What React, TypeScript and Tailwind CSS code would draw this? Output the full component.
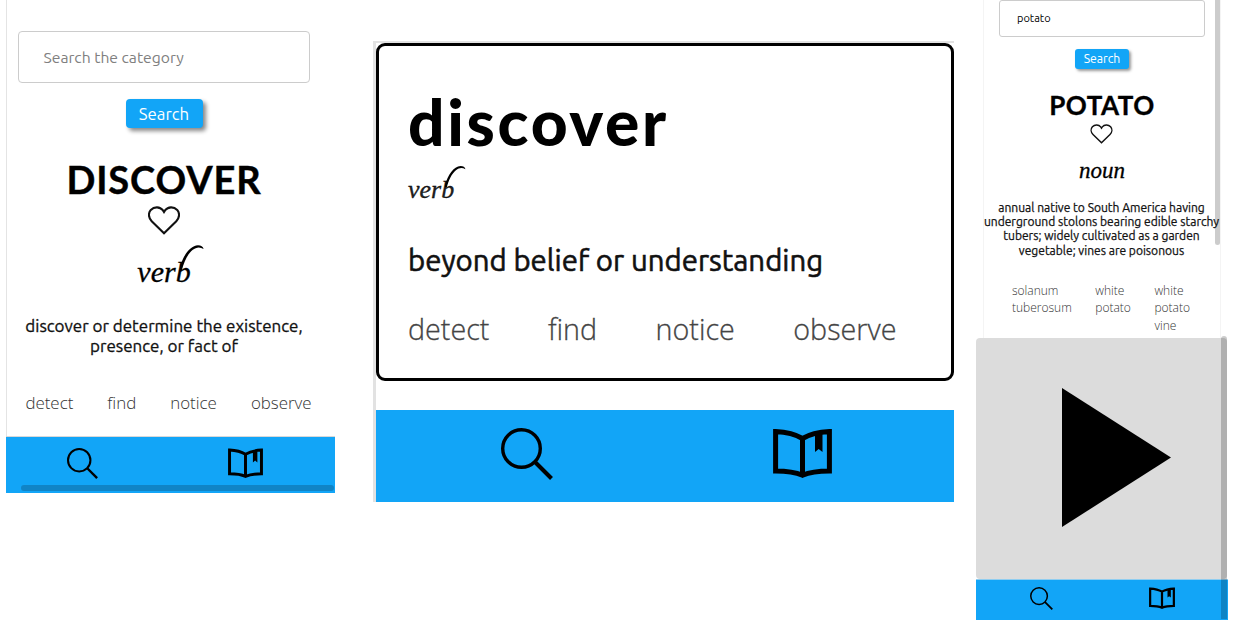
import React from "react";

const sans = "font-['Ubuntu','Noto_Sans',sans-serif]";
const light = "font-['Open_Sans','Noto_Sans',sans-serif] font-light";
const display = "font-['Lato',sans-serif]";
const script = "font-['Liberation_Serif',serif] italic [-webkit-text-stroke:0.3px_black]";

function SearchIcon({ className }: { className: string }) {
  return (
    <svg viewBox="0 0 52 52" className={className} fill="none" stroke="black" strokeWidth="3.4">
      <circle cx="20.5" cy="20.5" r="18.8" />
      <path d="M34 34 50.5 50.5" strokeWidth="4" />
    </svg>
  );
}

function BookIcon({ className }: { className: string }) {
  return (
    <svg viewBox="0 0 59 50" className={className} preserveAspectRatio="none">
      <path
        d="M2.6 3.5C13 4 22 6 29.5 10.5 37 6 46 4 56.4 3.5V43C46 43 37 44 29.5 47.3 22 44 13 43 2.6 43Z M29.5 10V47"
        fill="none"
        stroke="black"
        strokeWidth="5"
      />
      <path d="M42 5H49.5V24L45.7 21 42 24Z" fill="black" />
    </svg>
  );
}

function Heart({ className }: { className: string }) {
  return (
    <svg viewBox="0 0 32 29" className={className} fill="none" stroke="#111" strokeWidth="2.1">
      <path d="M16 27.3 3.7 15.2C.3 11.8.1 7 2.8 3.9 6.3.3 12 .6 14.8 4.2L16 6 17.2 4.2C20 .6 25.7.3 29.2 3.9 31.9 7 31.7 11.8 28.3 15.2Z" />
    </svg>
  );
}

function Swash({ className }: { className: string }) {
  return (
    <svg viewBox="0 0 24 28" className={className} fill="black">
      <path d="M-1 26C2 14 9 1.5 18 1.2 21 1.2 23 2.4 23.6 5 20 2.6 16.5 2.8 12.5 6 7.5 10 4 18 1.8 26Z" />
    </svg>
  );
}

function SearchPanel() {
  return (
    <section className="ml-[6px] flex h-[493px] w-[330px] shrink-0 flex-col">
      <div className="flex h-[436px] flex-col items-center border-l border-[#e4e4e4] pt-[31px] pr-[15px]">
        <div className={`${sans} flex h-[52px] w-[292px] shrink-0 items-center rounded-[4px] border-[1.5px] border-[#ccc] pt-px pl-[24.5px] text-[15.7px] text-[#808080]`}>
          Search the category
        </div>
        <button className={`${sans} mt-[16px] h-[29px] w-[77px] shrink-0 rounded-[4px] bg-[#12a5f7] text-[16.8px] leading-[29px] text-white shadow-[3px_3px_4px_#888]`}>
          Search
        </button>
        <h1 className={`${display} mt-[27px] h-[48px] text-[38px] leading-[48px] font-bold tracking-[0.9px] whitespace-nowrap text-black [-webkit-text-stroke:0.4px_black]`}>DISCOVER</h1>
        <Heart className="mt-[3px] h-[29px] w-[32px] shrink-0" />
        <p className={`${script} relative mt-[13px] h-[48px] text-[30px] leading-[48px] text-black`}>
          verb
          <Swash className="absolute top-[-4px] left-[43px] h-[28px] w-[24px]" />
        </p>
        <p className={`${sans} mt-[20px] text-center text-[17px] leading-[20px] whitespace-nowrap text-[#111] [-webkit-text-stroke:0.3px_#111]`}>
          discover or determine the existence,<br />presence, or fact of
        </p>
        <div className={`${light} mt-[35px] ml-[9px] flex gap-[34px] text-[16.9px] leading-[24px] text-[#333]`}>
          <span>detect</span><span>find</span><span>notice</span><span>observe</span>
        </div>
      </div>
      <nav className="flex h-[57px] w-[329px] flex-col border-t border-[#d8d8d8] bg-[#12a5f7]">
        <div className="flex pt-[11px] pl-[61px]">
          <SearchIcon className="h-[31px] w-[31px]" />
          <BookIcon className="ml-[130px] h-[30px] w-[35px]" />
        </div>
        <div className="mt-[6px] mr-px ml-[15px] h-[6px] rounded-full bg-[#1084c6]" />
      </nav>
    </section>
  );
}

function WordCard() {
  return (
    <section className="mt-[41px] ml-[37px] h-[461px] w-[581px] shrink-0 border-t-2 border-l-[3px] border-[#e2e2e2]">
      <div className="h-[338px] rounded-[9px] border-[3px] border-black pl-[29px]">
        <h2 className={`${display} mt-[41px] h-[70px] text-[64px] leading-[70px] font-black tracking-[2.7px] text-black`}>discover</h2>
        <p className={`${script} relative mt-[13px] h-[40px] w-fit text-[26px] leading-[40px] text-[#222]`}>
          verb
          <Swash className="absolute top-[-5px] left-[37px] h-[24px] w-[21px]" />
        </p>
        <p className={`${sans} mt-[31px] h-[40px] text-[29.4px] leading-[40px] whitespace-nowrap text-[#111] [-webkit-text-stroke:0.6px_#111]`}>beyond belief or understanding</p>
        <div className={`${light} mt-[28px] flex gap-[58.5px] text-[28.7px] leading-[40px] text-[#444] [-webkit-text-stroke:0.3px_#444]`}>
          <span>detect</span><span>find</span><span>notice</span><span>observe</span>
        </div>
      </div>
      <nav className="mt-[29px] flex h-[92px] bg-[#12a5f7] pt-[18px] pl-[125px]">
        <SearchIcon className="h-[52px] w-[52px]" />
        <BookIcon className="ml-[220px] h-[50px] w-[59px]" />
      </nav>
    </section>
  );
}

function PotatoPanel() {
  return (
    <section className="relative ml-[22px] flex h-[620px] w-[252px] shrink-0 flex-col">
      <div className="ml-[7px] flex h-[338px] w-[238px] flex-col items-center border-x border-[#f4f4f4]">
        <div className={`${sans} flex h-[37px] w-[206px] shrink-0 items-center rounded-[3px] border border-[#ccc] pl-[17px] text-[11px] text-black`}>potato</div>
        <button className={`${sans} mt-[12px] h-[20px] w-[54px] shrink-0 rounded-[3px] bg-[#12a5f7] text-[12.2px] leading-[20px] text-white shadow-[2px_2px_3px_#999]`}>Search</button>
        <h2 className={`${display} mt-[19px] h-[34px] text-[26px] leading-[34px] font-bold tracking-[0.5px] text-black [-webkit-text-stroke:0.3px_black]`}>POTATO</h2>
        <Heart className="mt-[2px] mr-px h-[20px] w-[23px] shrink-0" />
        <p className={`${script} mt-[12px] h-[30px] text-[23px] leading-[30px] text-black`}>noun</p>
        <p className={`${sans} mt-[15px] mr-px text-center text-[12.05px] leading-[14.2px] whitespace-nowrap text-[#111] [-webkit-text-stroke:0.25px_#111]`}>
          annual native to South America having<br />underground stolons bearing edible starchy<br />tubers; widely cultivated as a garden<br />vegetable; vines are poisonous
        </p>
        <div className={`${light} mt-[24px] mr-[2px] flex gap-[23.5px] text-[12px] leading-[17.5px] text-[#333]`}>
          <span>solanum<br />tuberosum</span>
          <span>white<br />potato</span>
          <span>white<br />potato<br />vine</span>
        </div>
      </div>
      <div className="h-[241px] w-[251px] rounded-[4px] bg-[#dcdcdc] pt-[50px] pl-[86px]">
        <svg viewBox="0 0 109 139" className="h-[139px] w-[109px]"><path d="M0 0 109 69.5 0 139Z" /></svg>
      </div>
      <nav className="flex h-[41px] border-t border-[#8fcdf0] bg-[#12a5f7] pt-[7px] pl-[54px]">
        <SearchIcon className="h-[23px] w-[23px]" />
        <BookIcon className="ml-[96px] h-[22px] w-[26px]" />
      </nav>
      <div className="absolute top-0 left-[239px] h-[245px] w-[5px] rounded-b-full bg-black/20" />
      <div className="absolute top-[336px] left-[245px] h-[283px] w-[6px] rounded-t-full bg-black/20" />
    </section>
  );
}

export default function App() {
  return (
    <main className="flex h-[629px] w-[1234px] items-start overflow-hidden bg-white">
      <SearchPanel />
      <WordCard />
      <PotatoPanel />
    </main>
  );
}
